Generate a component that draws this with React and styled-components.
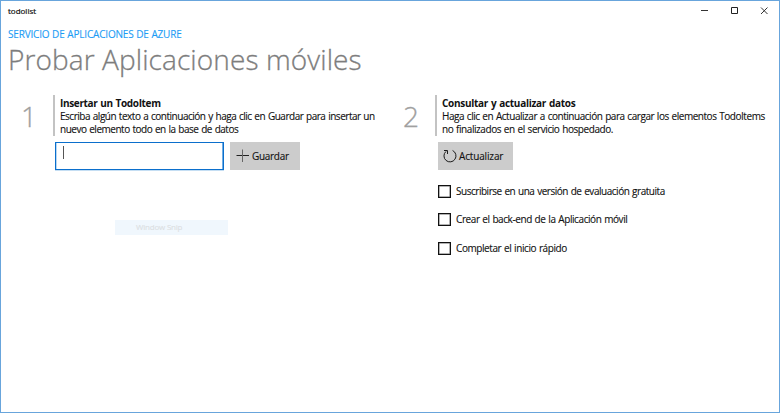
import React from 'react';
import styled, { createGlobalStyle } from 'styled-components';

const GlobalStyle = createGlobalStyle`
  * { box-sizing: border-box; }
  body { margin: 0; background: #fff; }
  input, button { font: inherit; border-radius: 0; }
`;

const Window = styled.div`
  width: 780px;
  height: 413px;
  border: 1px solid #68a5dc;
  background: #fff;
  color: #111;
  overflow: hidden;
  font-family: 'Open Sans', 'Noto Sans', sans-serif;
  font-size: 10px;
`;

const TitleBar = styled.header`
  display: flex;
  justify-content: space-between;
  height: 24px;
  padding: 2px 9px 0 7px;
`;

const Text = styled.span`
  display: block;
  width: max-content;
  white-space: nowrap;
  letter-spacing: ${(p) => p.$track || 0}px;
  word-spacing: ${(p) => p.$words || 0}px;
  -webkit-text-stroke: 0.12px currentColor;
`;

const AppName = styled(Text)`
  font-size: 8px;
  line-height: 15px;
  -webkit-text-stroke: 0.2px #111;
`;

const Controls = styled.div`
  display: flex;
  gap: 19px;
  padding-top: 2px;
`;

const Heading = styled.div`
  height: 70px;
  padding-left: 7px;
`;

const Eyebrow = styled(Text)`
  color: #1b9cf5;
  font-size: 10px;
  line-height: 18px;
`;

const Title = styled.h1`
  margin: 0;
  color: #7d7d7d;
  font-size: 28px;
  font-weight: 300;
  line-height: 33px;
  white-space: nowrap;
  width: max-content;
  letter-spacing: ${(p) => p.$track}px;
  -webkit-text-stroke: 0.3px #7d7d7d;
`;

const Columns = styled.main`
  display: grid;
  grid-template-columns: 382px 1fr;
`;

const Step = styled.section`
  display: grid;
  grid-template-columns: 52px 1fr;
  grid-template-rows: 41px auto;
  row-gap: 6px;
`;

const Numeral = styled.div`
  padding-left: 20px;
  color: #a0a0a0;
  font-size: 28px;
  font-weight: 300;
  line-height: 43px;
  -webkit-text-stroke: 0.3px #a0a0a0;
`;

const Description = styled.div`
  border-left: 2px solid #c3c3c3;
  padding: 2px 0 0 5px;
  line-height: 13px;
`;

const StepName = styled(Text)`
  font-weight: 700;
  -webkit-text-stroke: 0;
`;

const Body = styled.div`
  grid-column: 2;
  padding-left: ${(p) => p.$inset}px;
`;

const Row = styled.div`
  display: flex;
  gap: 6px;
`;

const Input = styled.div`
  width: 169px;
  height: 28px;
  border: 1px solid #0b6fcc;
  box-shadow: inset -1px 0 #70ade4, inset 1px 0 #b8d7f2, 0 1px #c5def3;
  padding: 3px 0 0 7px;
`;

const Caret = styled.div`
  width: 1px;
  height: 13px;
  background: #555;
`;

const Button = styled.button`
  display: flex;
  align-items: center;
  gap: 2px;
  width: ${(p) => p.$width}px;
  height: 28px;
  padding: 0 0 0 ${(p) => p.$pad}px;
  border: 0;
  background: #ccc;
  color: #111;
`;

const Checks = styled.div`
  display: flex;
  flex-direction: column;
  gap: 15px;
  padding-top: 15px;
`;

const CheckRow = styled.label`
  display: flex;
  gap: 5px;
  height: ${(p) => p.$height}px;
  line-height: 12px;
`;

const Box = styled.span`
  width: 13px;
  height: 13px;
  border: 1px solid #111;
  box-shadow: inset 0 0 0 0.5px #666;
`;

const SnipTag = styled.div`
  width: 113px;
  height: 15px;
  margin: 50px 0 0 60px;
  padding-left: 21px;
  background: #f0f7fd;
  color: #dcdfe3;
  font-size: 8px;
  line-height: 14px;
`;

const PlusIcon = () => (
  <svg width="14" height="14" viewBox="0 0 14 14" stroke="#222" fill="none">
    <path d="M0.5 6.5H13" />
    <path d="M6.5 0.5V13" stroke="#666" />
  </svg>
);

const RefreshIcon = () => (
  <svg width="14" height="14" viewBox="0 0 14 14" stroke="#1a1a1a" fill="none">
    <path d="M9.6 1.5A6 6 0 1 1 3 2.4" />
    <path d="M1 1.5H4.5V5" />
  </svg>
);

export default function App() {
  return (
    <>
      <GlobalStyle />
      <Window>
        <TitleBar>
          <AppName $track={0}>todolist</AppName>
          <Controls>
            <svg width="12" height="12" fill="none" stroke="#333"><path d="M1 5.5H8" /></svg>
            <svg width="10" height="12" fill="none" stroke="#222"><path d="M0.5 2.5H6.5V8.5H0.5Z" /></svg>
            <svg width="10" height="12" fill="none" stroke="#333"><path d="M1 2.5L7.5 9M7.5 2.5L1 9" /></svg>
          </Controls>
        </TitleBar>
        <Heading>
          <Eyebrow $track={-0.18} $words={0.3}>SERVICIO DE APLICACIONES DE AZURE</Eyebrow>
          <Title $track={0.1}>Probar Aplicaciones móviles</Title>
        </Heading>
        <Columns>
          <Step>
            <Numeral>1</Numeral>
            <Description>
              <StepName $track={-0.34} $words={0.5}>Insertar un TodoItem</StepName>
              <Text $track={-0.48} $words={0.6}>Escriba algún texto a continuación y haga clic en Guardar para insertar un</Text>
              <Text $track={-0.48} $words={0.6}>nuevo elemento todo en la base de datos</Text>
            </Description>
            <Body $inset={2}>
              <Row>
                <Input><Caret /></Input>
                <Button $width={70} $pad={6}><PlusIcon /><Text $track={-0.3}>Guardar</Text></Button>
              </Row>
              <SnipTag><Text $track={-0.2}>Window Snip</Text></SnipTag>
            </Body>
          </Step>
          <Step>
            <Numeral>2</Numeral>
            <Description>
              <StepName $track={-0.28} $words={0.5}>Consultar y actualizar datos</StepName>
              <Text $track={-0.46} $words={0.6}>Haga clic en Actualizar a continuación para cargar los elementos TodoItems</Text>
              <Text $track={-0.43} $words={0.6}>no finalizados en el servicio hospedado.</Text>
            </Description>
            <Body $inset={3}>
              <Button $width={75} $pad={5}><RefreshIcon /><Text $track={-0.15}>Actualizar</Text></Button>
              <Checks>
                <CheckRow $height={13}><Box /><Text $track={-0.47} $words={0.6}>Suscribirse en una versión de evaluación gratuita</Text></CheckRow>
                <CheckRow $height={14}><Box /><Text $track={-0.42} $words={0.6}>Crear el back-end de la Aplicación móvil</Text></CheckRow>
                <CheckRow $height={13}><Box /><Text $track={-0.42} $words={0.6}>Completar el inicio rápido</Text></CheckRow>
              </Checks>
            </Body>
          </Step>
        </Columns>
      </Window>
    </>
  );
}
